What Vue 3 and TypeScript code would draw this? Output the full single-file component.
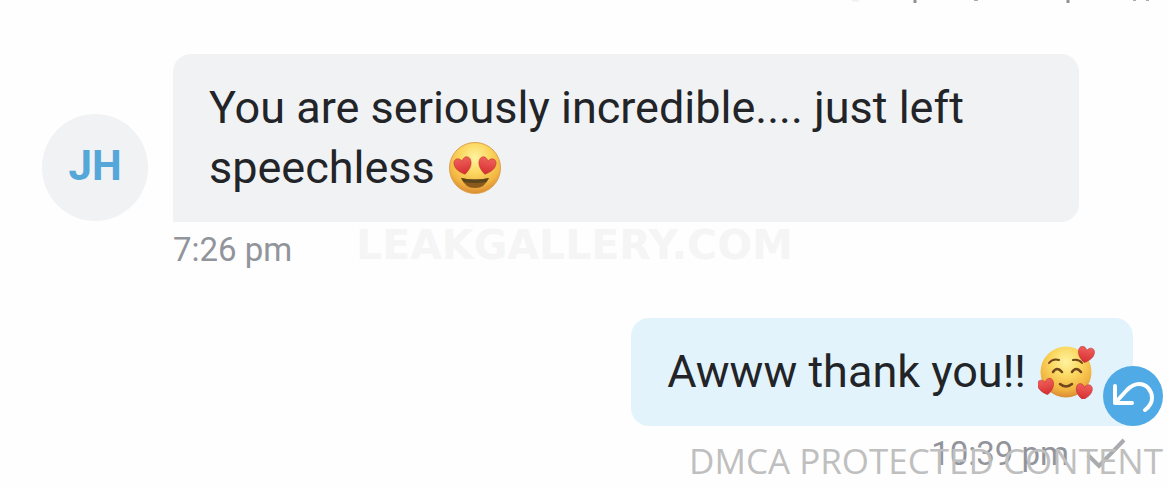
<script setup lang="ts">
interface Message {
  id: number
  outgoing: boolean
  text: string
  emoji: 'hearts-eyes' | 'adoring'
  time: string
}

const messages: Message[] = [
  {
    id: 1,
    outgoing: false,
    text: 'You are seriously incredible.... just left speechless',
    emoji: 'hearts-eyes',
    time: '7:26 pm',
  },
  { id: 2, outgoing: true, text: 'Awww thank you!!', emoji: 'adoring', time: '10:39 pm' },
]

const heart = 'M0 10 C-5 7 -10 2 -9 -4 C-8 -9 -2 -9 0 -4 C2 -9 8 -9 9 -4 C10 2 5 7 0 10 Z'
</script>

<template>
  <main class="chat">
    <svg class="cut-line" viewBox="0 0 327 12" aria-hidden="true">
      <path d="M75 0V3M228 0V3" stroke="#909197" stroke-width="3" />
      <path d="M134 0h4M293 0h3M306 0h3" stroke="#aaabad" stroke-width="2" />
      <path d="M12 0h7" stroke="#f0f0f0" stroke-width="3" />
    </svg>

    <svg class="defs" aria-hidden="true">
      <defs>
        <radialGradient id="face" cx="50%" cy="30%" r="70%">
          <stop offset="0" stop-color="#fff3a0" />
          <stop offset="0.4" stop-color="#fbd963" />
          <stop offset="0.78" stop-color="#f2b541" />
          <stop offset="1" stop-color="#d98a34" />
        </radialGradient>
        <linearGradient id="heart" x1="0" y1="0" x2="0" y2="1">
          <stop offset="0" stop-color="#f0605a" />
          <stop offset="1" stop-color="#d52d31" />
        </linearGradient>
      </defs>
    </svg>

    <section
      v-for="message in messages"
      :key="message.id"
      class="message"
      :class="{ outgoing: message.outgoing }"
    >
      <div v-if="!message.outgoing" class="avatar">JH</div>
      <div class="body">
        <p class="bubble">
          {{ message.text }}
          <svg
            v-if="message.emoji === 'hearts-eyes'"
            class="emoji"
            viewBox="0 0 54 54"
            role="img"
            aria-label="Smiling face with heart eyes"
          >
            <circle cx="27" cy="27" r="25.5" fill="url(#face)" stroke="#e0a04a" />
            <g fill="url(#heart)" stroke="#bd3a25" stroke-width="0.6">
              <path :d="heart" transform="translate(15 24) rotate(-13) scale(.94)" />
              <path :d="heart" transform="translate(39 24) rotate(13) scale(.94)" />
            </g>
            <path d="M13 37 Q27 40 41 37 Q37 47 27 47 Q17 47 13 37Z" fill="#8a5a1c" />
            <path d="M13 37 Q27 40 41 37 L38 41 Q27 43 16 41Z" fill="#59451c" />
          </svg>
          <svg
            v-else
            class="emoji adoring"
            viewBox="0 0 58 54"
            role="img"
            aria-label="Smiling face with hearts"
          >
            <circle cx="28" cy="27" r="25.5" fill="url(#face)" />
            <g fill="none" stroke="#70451b" stroke-linecap="round" stroke-width="2">
              <path d="M11 18 Q15 13 21 15M35 15 Q41 14 44 18" />
              <path d="M15 27 Q19 21 24 27M34 27 Q38 21 43 27" stroke-width="2.5" />
              <path d="M22 39 Q28 44 34 39" stroke-width="2.5" />
            </g>
            <g fill="url(#heart)" stroke="#b92d34" stroke-width="0.6">
              <path :d="heart" transform="translate(48 9) rotate(12) scale(.88)" />
              <path :d="heart" transform="translate(8 41) rotate(-12) scale(.88)" />
              <path :d="heart" transform="translate(46 46) rotate(8) scale(.88)" />
            </g>
          </svg>
        </p>
        <button v-if="message.outgoing" class="undo" type="button" aria-label="Undo">
          <svg viewBox="0 0 60 60" aria-hidden="true">
            <path
              d="M12 20V37H29M13 36L24 24C28 20 31 18 36 18C44 18 49 25 49 32C49 37 46 41 42 44"
              fill="none"
              stroke="#fff"
              stroke-width="4"
              stroke-linecap="round"
              stroke-linejoin="round"
            />
          </svg>
        </button>
        <footer class="meta">
          <time>{{ message.time }}</time>
          <svg v-if="message.outgoing" class="check" viewBox="0 0 42 32" role="img" aria-label="Sent">
            <path d="M3 17L14 28L39 2" fill="none" stroke="#a9abae" stroke-width="4" />
          </svg>
        </footer>
      </div>
    </section>

    <div class="watermark gallery">LEAKGALLERY.COM</div>
    <div class="watermark notice">DMCA PROTECTED CONTENT</div>
  </main>
</template>

<style>
body {
  margin: 0;
  background: #fefefe;
}
</style>

<style scoped>
.chat {
  position: relative;
  display: flex;
  flex-direction: column;
  gap: 40px;
  box-sizing: border-box;
  min-height: 100vh;
  padding: 54px 34px 0 42px;
  font-family: Roboto, "Liberation Sans", sans-serif;
}

.cut-line {
  position: absolute;
  top: 0;
  right: 0;
  width: 327px;
  height: 12px;
}

.defs {
  position: absolute;
  width: 0;
  height: 0;
}

.message {
  display: flex;
  gap: 25px;
  padding-right: 54px;
}

.outgoing {
  justify-content: flex-end;
  padding-right: 0;
}

.avatar {
  display: flex;
  flex: none;
  align-items: center;
  justify-content: center;
  box-sizing: border-box;
  width: 106px;
  height: 107px;
  margin-top: 60px;
  padding-bottom: 4px;
  border-radius: 50%;
  background: #f0f2f4;
  color: #55a6d9;
  font-size: 42px;
  font-weight: 700;
}

.body {
  position: relative;
  flex: 1;
}

.outgoing .body {
  flex: none;
}

.bubble {
  margin: 0;
  padding: 24px 36px;
  border-radius: 18px 18px 18px 0;
  background: #f0f2f4;
  color: #222428;
  font-size: 45px;
  line-height: 60px;
}

.outgoing .bubble {
  border-radius: 18px 18px 0 18px;
  background: #e2f3fc;
}

.emoji {
  width: 54px;
  height: 54px;
  margin: -4px 0 0 2px;
  vertical-align: -12px;
}

.emoji.adoring {
  width: 58px;
  margin-right: 1px;
  margin-left: 1px;
}

.undo {
  position: absolute;
  top: 48px;
  right: -30px;
  width: 60px;
  height: 60px;
  padding: 0;
  border: 0;
  border-radius: 50%;
  background: #4faae5;
}

.undo svg {
  display: block;
  width: 60px;
  height: 60px;
}

.meta {
  display: flex;
  align-items: center;
  gap: 16px;
  height: 56px;
  color: #92949b;
  font-size: 33px;
  line-height: 56px;
}

.outgoing .meta {
  justify-content: flex-end;
  padding-right: 6px;
}

.check {
  width: 42px;
  height: 32px;
}

.watermark {
  position: absolute;
  white-space: nowrap;
  pointer-events: none;
}

.gallery {
  top: 223px;
  left: 356px;
  color: #f5f5f5;
  font-family: "DejaVu Sans", sans-serif;
  font-size: 41px;
  font-weight: 700;
  line-height: 44px;
}

.notice {
  right: 4px;
  bottom: 4px;
  color: #bfbfbf;
  font-family: "Open Sans", "Noto Sans", sans-serif;
  font-size: 35px;
  font-weight: 400;
  line-height: 48px;
}
</style>
